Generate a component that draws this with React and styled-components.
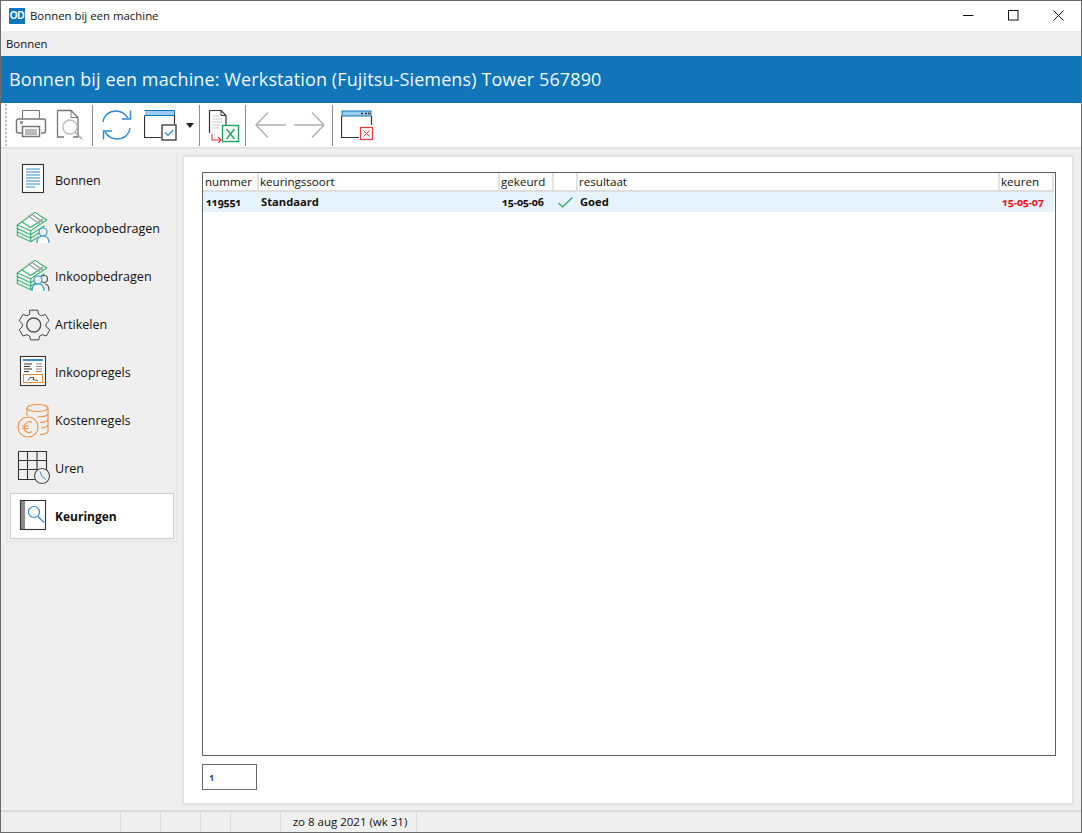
import styled, { createGlobalStyle } from "styled-components";

const GlobalStyle = createGlobalStyle`
  html, body {
    margin: 0;
    padding: 0;
    background: #efefef;
  }
  body {
    font-family: "Open Sans", "Noto Sans", "Liberation Sans", sans-serif;
    color: #111;
  }
`;

const Window = styled.div`
  width: 1082px;
  height: 833px;
  box-sizing: border-box;
  display: flex;
  flex-direction: column;
  background: #efefef;
  border: 1px solid #6a6a6a;
  overflow: hidden;
`;

const TitleBar = styled.div`
  height: 30px;
  flex: none;
  background: #fff;
  display: flex;
  align-items: center;
  padding-left: 8px;
`;

const TitleLogo = styled.div`
  width: 16px;
  height: 16px;
  background: #1175b9;
  color: #fff;
  font: bold 10px/16px "Liberation Sans", sans-serif;
  text-align: center;
  letter-spacing: -0.3px;
`;

const TitleText = styled.div`
  margin-left: 5px;
  margin-top: -2px;
  font-size: 11.4px;
  flex: 1;
`;

const WindowButton = styled.div`
  width: 45px;
  height: 30px;
  margin-top: -2px;
  display: flex;
  align-items: center;
  justify-content: center;
`;

const MenuBar = styled.div`
  height: 25px;
  flex: none;
  background: #eeeeee;
  font-size: 11.4px;
  line-height: 26px;
  padding-left: 5px;
`;

const Banner = styled.div`
  height: 47px;
  flex: none;
  box-sizing: border-box;
  background: #1175b9;
  color: #f2f8fc;
  font-family: "Open Sans", sans-serif;
  font-size: 18px;
  line-height: 47px;
  padding-left: 8px;
  letter-spacing: 0.12px;
`;

const Toolbar = styled.div`
  height: 46px;
  flex: none;
  box-sizing: border-box;
  background: #fff;
  border-bottom: 2px solid #e2e2e2;
  display: flex;
  align-items: center;
  padding-left: 4px;
`;

const Grip = styled.div`
  width: 2px;
  height: 42px;
  margin-right: 8px;
  background: repeating-linear-gradient(to bottom, #bdbdbd 0 2px, transparent 2px 4px);
`;

const ToolIcon = styled.div`
  width: ${(p) => p.$w || 36}px;
  height: 36px;
  flex: none;
  margin-right: ${(p) => p.$mr || 0}px;
  svg {
    display: block;
  }
`;

const ToolDivider = styled.div`
  width: 1px;
  height: 41px;
  background: #8c8c8c;
  margin: 0 ${(p) => p.$right || 7}px 0 ${(p) => p.$left || 7}px;
  flex: none;
`;

const DropArrow = styled.svg`
  margin-left: 8px;
  flex: none;
`;

const Body = styled.div`
  flex: 1;
  display: flex;
  min-height: 0;
`;

const Sidebar = styled.div`
  width: 170px;
  height: 389px;
  box-sizing: border-box;
  margin: 4px 0 0 6px;
  flex: none;
  border: 1px solid #e4e4e4;
  border-top: none;
  padding: 3px 2px 0;
`;

const NavItem = styled.div`
  height: ${(p) => (p.$active ? 46 : 48)}px;
  box-sizing: border-box;
  display: flex;
  align-items: center;
  padding-left: ${(p) => (p.$active ? 5 : 6)}px;
  font-size: ${(p) => (p.$active ? 12 : 12.55)}px;
  font-weight: ${(p) => (p.$active ? 700 : 400)};
  ${(p) =>
    p.$active &&
    `
    background: #fff;
    border: 1px solid #cfcfcf;
    margin-top: 1px;
  `}
`;

const NavIcon = styled.div`
  width: 36px;
  height: 36px;
  flex: none;
  margin-right: 3px;
`;

const Content = styled.div`
  width: 892px;
  height: 650px;
  box-sizing: border-box;
  margin: 6px 0 0 5px;
  flex: none;
  background: #fff;
  border: 2px solid #e3e3e3;
  padding: 15px 16px 0 18px;
`;

const TableFrame = styled.div`
  height: 584px;
  box-sizing: border-box;
  border: 1px solid #5f5f5f;
  font-size: 11.6px;
`;

const Row = styled.div`
  display: grid;
  grid-template-columns: 56px 241px 54px 24px 422px 1fr;
  height: ${(p) => (p.$head ? 19 : 20)}px;
  box-sizing: border-box;
  background: ${(p) => (p.$head ? "#fff" : "#e6f2fc")};
  border-bottom: ${(p) => (p.$head ? "2px solid #dedede" : "none")};
  margin-right: 1px;
`;

const HeadCell = styled.div`
  border-right: 2px solid #e3e3e3;
  padding-left: ${(p) => p.$pad ?? 1}px;
  line-height: 18px;
  white-space: nowrap;
  overflow: hidden;
`;

const Cell = styled.div`
  padding-left: ${(p) => p.$pad ?? 2}px;
  line-height: 20px;
  font-weight: 700;
  font-size: 11.2px;
  color: ${(p) => p.$color || "#111"};
  white-space: nowrap;
  display: flex;
  align-items: center;
`;

const NumberCell = styled(Cell)`
  font-size: 10.6px;
  font-weight: 700;
  font-variant-numeric: oldstyle-nums;
  letter-spacing: -0.25px;
`;

const Pager = styled.div`
  width: 55px;
  height: 26px;
  box-sizing: border-box;
  margin-top: 8px;
  border: 1px solid #6a6a6a;
  font-size: 10px;
  font-weight: 600;
  line-height: 25px;
  padding-left: 6px;
  font-variant-numeric: oldstyle-nums;
  color: #234;
`;

const StatusBar = styled.div`
  height: 22px;
  flex: none;
  box-sizing: border-box;
  border-top: 2px solid #dcdcdc;
  display: flex;
  background: #efefef;
  font-size: 11.5px;
`;

const StatusCell = styled.div`
  width: ${(p) => p.$w}px;
  box-sizing: border-box;
  border-right: ${(p) => (p.$last ? "none" : "1.5px solid #dcdcdc")};
  text-align: center;
  line-height: 20px;
  padding-left: ${(p) => p.$pad || 0}px;
  white-space: nowrap;
`;

const s = { fill: "none", strokeWidth: 1 };

const PrinterIcon = () => (
  <svg width="34" height="36" viewBox="0 0 34 36" {...s} stroke="#777">
    <path d="M7.5 12V3.5h17V12" />
    <path d="M7 26H3.5a2 2 0 0 1-2-2V14a2 2 0 0 1 2-2h25a2 2 0 0 1 2 2v10a2 2 0 0 1-2 2H26" strokeWidth="1.5" />
    <rect x="7.5" y="19.5" width="17" height="10" strokeWidth="1.5" />
    <path d="M10 23h12M10 25h12M10 27h12" />
    <rect x="5" y="14" width="3" height="3" fill="#999" stroke="none" />
  </svg>
);

const PreviewIcon = () => (
  <svg width="34" height="36" viewBox="0 0 34 36" {...s} stroke="#777" style={{ marginLeft: -3 }}>
    <path d="M3.5 3.5H17l7 7V30H19M3.5 3.5V30H10" strokeWidth="1.3" />
    <path d="M17 3.5v7h7" />
    <circle cx="16" cy="20" r="7" stroke="#bbb" strokeWidth="1.3" />
    <path d="M21 25l7 7" stroke="#aaa" strokeWidth="1.5" />
  </svg>
);

const RefreshIcon = () => (
  <svg width="32" height="36" viewBox="0 0 32 36" {...s} stroke="#2e8ad0" strokeWidth="1.4" style={{ marginLeft: -1 }}>
    <path d="M2 15C3 8 8.500 4 15 4c5 0 9 2.500 12 7" />
    <path d="M29.500 3.500V12h-8.500" />
    <path d="M29 21c-1 7-6.500 11-13 11-5 0-9-2.500-12-7" />
    <path d="M2.500 32.500V24H11" />
  </svg>
);

const WindowCheckIcon = () => (
  <svg width="34" height="36" viewBox="0 0 34 36" {...s}>
    <rect x="1" y="3" width="29" height="5" fill="#9bcbee" />
    <path d="M0.500 3.500h30v5h-30" stroke="#1175b9" />
    <path d="M0.500 8.500V30.500H17M30.500 8.500V17" stroke="#333" strokeWidth="1.2" />
    <rect x="18" y="18" width="14" height="15" stroke="#333" strokeWidth="1.3" fill="#fff" />
    <path d="M21 25.500l3 3 5-5.500" stroke="#2e8ad0" strokeWidth="1.2" />
  </svg>
);

const ExportIcon = () => (
  <svg width="34" height="36" viewBox="0 0 34 36" {...s}>
    <path d="M1.500 3.500H13l5 5V18M1.500 3.500V26" stroke="#333" strokeWidth="1.2" />
    <path d="M13 3.500v5h5" stroke="#333" />
    <path d="M4 9h7M4 12h10M4 15h10M4 18h8M4 21h7" stroke="#ccc" />
    <path d="M4 27v6h9M10 30l3 3-3 3" stroke="#e8383d" strokeWidth="1.1" />
    <rect x="14.500" y="18.500" width="16" height="16" stroke="#1ea35c" strokeWidth="1.4" fill="#fff" />
    <path d="M18.500 22l8 10M26.500 22l-8 10" stroke="#1ea35c" strokeWidth="1.4" />
  </svg>
);

const ArrowLeft = () => (
  <svg width="32" height="36" viewBox="0 0 32 36" {...s} stroke="#b0b0b0" strokeWidth="1.4">
    <path d="M1 18h30M13 5.500L1 18l12 12.500" />
  </svg>
);

const ArrowRight = () => (
  <svg width="32" height="36" viewBox="0 0 32 36" {...s} stroke="#b0b0b0" strokeWidth="1.4">
    <path d="M0 18h30M18 5.500L30 18 18 30.500" />
  </svg>
);

const WindowCloseIcon = () => (
  <svg width="34" height="36" viewBox="0 0 34 36" {...s}>
    <rect x="1" y="4" width="29" height="5" fill="#9bcbee" stroke="#1175b9" />
    <path d="M20 6.500h2M24 6.500h2M27 6.500h2" stroke="#333" strokeWidth="1.500" />
    <path d="M0.500 9V30.500H18M30.500 9V18" stroke="#333" strokeWidth="1.2" />
    <rect x="19.500" y="20.500" width="12" height="12" stroke="#e8383d" strokeWidth="1.2" fill="#fff" />
    <path d="M22.500 23.500l6 6M28.500 23.500l-6 6" stroke="#e8383d" />
  </svg>
);

const DocIcon = () => (
  <svg width="36" height="36" viewBox="0 0 36 36" {...s}>
    <rect x="6.500" y="2.500" width="21" height="28" stroke="#333" fill="#fff" strokeWidth="1.1" />
    <path d="M10 7h14M10 10h14M10 13h14M10 16h14M10 19h14M10 22h14M10 25h9" stroke="#2e8ad0" />
  </svg>
);

const MoneyStack = () => (
  <g>
    <path d="M1.300 15L19 2.300 30.700 10 14.700 20.700z" stroke="#2fb368" strokeWidth="1.100" fill="#fff" />
    <path d="M1.300 15v3.500l13.400 6.200 14-9M1.300 18.500V22l13.400 6.200 11-7M1.300 22v3.500l13.400 6.200 8-5M14.700 20.700v11M6 12l8.700 5.500L27 9" stroke="#2fb368" strokeWidth="1.100" />
    <path d="M12 5.700l12 8.300M15 3.800l12 8.300" stroke="#999" strokeWidth="1.300" />
  </g>
);

const PersonBlue = ({ x = 0 }) => (
  <g transform={`translate(${x} 0)`} stroke="#3a97d8" strokeWidth="1.200">
    <circle cx="26" cy="22" r="4" fill="#efefef" />
    <path d="M20 33c0-5 2.500-7 6-7s6 2 6 7" fill="#fff" />
  </g>
);

const SalesIcon = () => (
  <svg width="36" height="36" viewBox="0 0 36 36" {...s}>
    <MoneyStack />
    <PersonBlue x={1} />
  </svg>
);

const PurchaseIcon = () => (
  <svg width="36" height="36" viewBox="0 0 36 36" {...s}>
    <MoneyStack />
    <g stroke="#555" strokeWidth="1.100">
      <circle cx="28" cy="21" r="3.500" />
      <path d="M29 26c2.500 0 4 2 4 7" />
    </g>
    <PersonBlue x={-4} />
  </svg>
);

const GearIcon = () => (
  <svg width="36" height="36" viewBox="0 0 36 36" {...s} stroke="#444" strokeWidth="1.100">
    <path d="M13.500 3h9l1 4.500 3 1.700 4.500-1.500 4 7-3.300 3.300v3.400L36 24.700l-4 7-4.500-1.500-3 1.700-1 4.100h-9l-1-4.100-3-1.700L6 31.700l-4-7 3.300-3.300v-3.400L2 14.700l4-7 4.500 1.500 3-1.700z" transform="translate(1.500 1.500) scale(0.9)" />
    <circle cx="17.700" cy="19" r="7" strokeWidth="1.400" stroke="#555" />
  </svg>
);

const InvoiceIcon = () => (
  <svg width="36" height="36" viewBox="0 0 36 36" {...s}>
    <rect x="4.500" y="2.500" width="25" height="29" stroke="#333" strokeWidth="1.100" fill="#fff" />
    <path d="M7 6h20" stroke="#1175b9" strokeWidth="1.600" />
    <path d="M8 10h8M8 12.500h6M8 15h8M8 17.500h5" stroke="#333" />
    <path d="M20 10h6M20 12.500h6M20 15h6M20 17.500h6" stroke="#888" />
    <rect x="7.500" y="20.500" width="19" height="8" stroke="#e98a35" />
    <path d="M12 26.500l2-3h4l-1 2 5 1" stroke="#555" />
  </svg>
);

const CoinsIcon = () => (
  <svg width="36" height="36" viewBox="0 0 36 36" {...s} stroke="#ef9344" strokeWidth="1.100">
    <ellipse cx="21.500" cy="6" rx="10.500" ry="3.500" />
    <path d="M11 6v8M32 6v23c0 1.800-3.500 3.300-8 3.500M32 11.500c0 2-4.500 3.500-10.500 3.500M32 17c0 2-4 3.300-8 3.500M32 22.500c0 2-4 3.300-7 3.500" />
    <circle cx="12" cy="25" r="10" fill="#efefef" />
    <path d="M16 20.500c-3-2-7-.5-7.500 4.500s4 7 7.500 4.500M6 24h7M6 26.500h7" />
  </svg>
);

const HoursIcon = () => (
  <svg width="36" height="36" viewBox="0 0 36 36" {...s}>
    <path d="M2.500 1.500h28v21M2.500 1.500v28h17M2.500 10.500h28M2.500 19.500h20M11.500 1.500v28M21 1.500v19" stroke="#333" strokeWidth="1.100" />
    <circle cx="26" cy="26" r="7.500" stroke="#555" strokeWidth="1.200" fill="#efefef" />
    <path d="M24 21.500l2 5 4 3" stroke="#2e8ad0" />
  </svg>
);

const InspectionIcon = () => (
  <svg width="36" height="36" viewBox="0 0 36 36" {...s}>
    <rect x="4.500" y="2.500" width="25" height="29" stroke="#333" strokeWidth="1.100" fill="#fff" />
    <rect x="5" y="3" width="4" height="28" fill="#8a8a8a" />
    <circle cx="18" cy="14" r="5.500" stroke="#2e8ad0" strokeWidth="1.200" />
    <path d="M22 18.500l6 6" stroke="#2e8ad0" strokeWidth="1.300" />
  </svg>
);

const navItems = [
  { label: "Bonnen", icon: <DocIcon /> },
  { label: "Verkoopbedragen", icon: <SalesIcon /> },
  { label: "Inkoopbedragen", icon: <PurchaseIcon /> },
  { label: "Artikelen", icon: <GearIcon /> },
  { label: "Inkoopregels", icon: <InvoiceIcon /> },
  { label: "Kostenregels", icon: <CoinsIcon /> },
  { label: "Uren", icon: <HoursIcon /> },
  { label: "Keuringen", icon: <InspectionIcon />, active: true },
];

const App = () => {
  return (
    <>
      <GlobalStyle />
      <Window>
        <TitleBar>
          <TitleLogo>OD</TitleLogo>
          <TitleText>Bonnen bij een machine</TitleText>
          <WindowButton>
            <svg width="11" height="11" viewBox="0 0 11 11"><path d="M0 5.500h10.500" stroke="#111" /></svg>
          </WindowButton>
          <WindowButton>
            <svg width="11" height="11" viewBox="0 0 11 11"><rect x="0.500" y="0.500" width="9.500" height="9.500" fill="none" stroke="#111" /></svg>
          </WindowButton>
          <WindowButton>
            <svg width="11" height="11" viewBox="0 0 11 11"><path d="M0.500 0.500l10 10M10.500 0.500l-10 10" stroke="#111" /></svg>
          </WindowButton>
        </TitleBar>
        <MenuBar>Bonnen</MenuBar>
        <Banner>Bonnen bij een machine: Werkstation (Fujitsu-Siemens) Tower 567890</Banner>
        <Toolbar>
          <Grip />
          <ToolIcon $mr={6}><PrinterIcon /></ToolIcon>
          <ToolIcon $w={30}><PreviewIcon /></ToolIcon>
          <ToolDivider $left={5} $right={9} />
          <ToolIcon $w={33} $mr={9}><RefreshIcon /></ToolIcon>
          <ToolIcon $w={34}><WindowCheckIcon /></ToolIcon>
          <DropArrow width="8" height="5" viewBox="0 0 8 5"><path d="M0 0h8L4 5z" fill="#222" /></DropArrow>
          <ToolDivider $left={5} $right={8} />
          <ToolIcon $w={31}><ExportIcon /></ToolIcon>
          <ToolDivider $left={6} $right={9} />
          <ToolIcon $w={32} $mr={7}><ArrowLeft /></ToolIcon>
          <ToolIcon $w={32}><ArrowRight /></ToolIcon>
          <ToolDivider $left={6} $right={8} />
          <ToolIcon><WindowCloseIcon /></ToolIcon>
        </Toolbar>
        <Body>
          <Sidebar>
            {navItems.map((item) => (
              <NavItem key={item.label} $active={item.active}>
                <NavIcon>{item.icon}</NavIcon>
                {item.label}
              </NavItem>
            ))}
          </Sidebar>
          <Content>
            <TableFrame>
              <Row $head>
                <HeadCell $pad={2}>nummer</HeadCell>
                <HeadCell>keuringssoort</HeadCell>
                <HeadCell>gekeurd</HeadCell>
                <HeadCell />
                <HeadCell>resultaat</HeadCell>
                <HeadCell>keuren</HeadCell>
              </Row>
              <Row>
                <NumberCell $pad={3}>119551</NumberCell>
                <Cell>Standaard</Cell>
                <NumberCell>15-05-06</NumberCell>
                <Cell $pad={4}>
                  <svg width="15" height="11" viewBox="0 0 15 11"><path d="M0.500 6l4 4L14.500 0.500" fill="none" stroke="#2fa866" strokeWidth="1.200" /></svg>
                </Cell>
                <Cell>Goed</Cell>
                <NumberCell $color="#f0141e">15-05-07</NumberCell>
              </Row>
            </TableFrame>
            <Pager>1</Pager>
          </Content>
        </Body>
        <StatusBar>
          <StatusCell $w={120} />
          <StatusCell $w={40} />
          <StatusCell $w={40} />
          <StatusCell $w={30} />
          <StatusCell $w={50} />
          <StatusCell $w={136} $pad={3}>zo 8 aug 2021 (wk 31)</StatusCell>
          <StatusCell $last $w={60} />
        </StatusBar>
      </Window>
    </>
  );
};

export default App;
